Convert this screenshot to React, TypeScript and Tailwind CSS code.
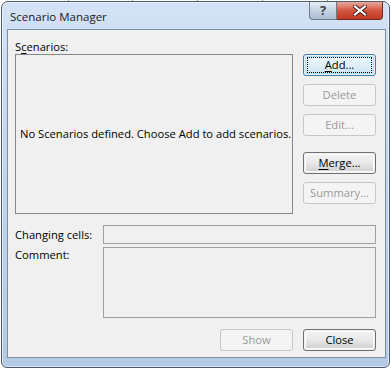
import React from 'react';

const font = { fontFamily: '"Open Sans", "Noto Sans", sans-serif' };

function Btn({ label, k, disabled, primary, className = '' }: { label: string; k?: string; disabled?: boolean; primary?: boolean; className?: string }) {
  const text = k ? (
    <>
      {label.slice(0, label.indexOf(k))}
      <span className="underline underline-offset-2">{k}</span>
      {label.slice(label.indexOf(k) + 1)}
    </>
  ) : (
    label
  );
  if (disabled) {
    return (
      <div className={`flex h-[22px] w-[73px] items-center justify-center rounded-[3px] border border-[#c4c8cc] bg-[#f4f4f4] text-[#9a9a9a] ${className}`}>
        {text}
      </div>
    );
  }
  return (
    <div
      className={`h-[22px] w-[73px] rounded-[3px] border p-px ${primary ? 'border-[#3c7fb1]' : 'border-[#707070]'} ${className}`}
    >
      <div
        className={`flex h-full w-full items-center justify-center rounded-[2px] border text-black ${
          primary ? 'border-[#a8dff7] bg-gradient-to-b from-[#eaf6fd] via-[#e2f0f9] to-[#cde3f2]' : 'border-[#fcfcfc] bg-gradient-to-b from-[#f2f2f2] via-[#e8e8e8] to-[#d2d2d2]'
        }`}
      >
        <div className={`flex h-[14px] items-center ${primary ? 'w-[63px] justify-center outline outline-1 outline-dotted outline-black' : ''}`}>
          {text}
        </div>
      </div>
    </div>
  );
}

export default function App() {
  return (
    <div className="relative h-[368px] w-[391px] overflow-hidden bg-white text-[11.2px]" style={font}>
      {/* spreadsheet behind the dialog */}
      <div className="flex h-[3px] w-full">
        <div className="w-[69px] border-r border-[#9a9a9a]" />
        <div className="w-[64px] border-r border-[#9a9a9a]" />
        <div className="w-[65px] border-r border-[#9a9a9a]" />
        <div className="w-[65px] border-r border-[#9a9a9a]" />
        <div className="w-[65px] border-r border-[#9a9a9a]" />
      </div>

      {/* window */}
      <div className="absolute left-[1px] top-[1px] flex h-[367px] w-[389px] flex-col rounded-t-[7px] rounded-b-[6px] border border-[#4d5a68] bg-gradient-to-b from-[#d3e2f4] via-[#bfd4ee] to-[#b3cae6] shadow-[inset_0_0_0_1px_rgba(255,255,255,0.55)]">
        {/* title bar */}
        <div className="flex h-[27px] shrink-0 items-start justify-between">
          <div className="pl-[8px] pt-[6px] text-[11.5px] text-[#1a1a1a]">Scenario Manager</div>
          <div className="mr-[6px] flex">
            <div className="flex h-[18px] w-[28px] items-center justify-center rounded-bl-[4px] border border-t-0 border-[#6a7b90] bg-gradient-to-b from-[#e4ecf5] via-[#c6d3e2] to-[#a9bcd3] text-[13px] font-bold text-[#39434f]">
              ?
            </div>
            <div className="flex h-[18px] w-[46px] items-center justify-center rounded-br-[4px] border border-l-0 border-t-0 border-[#6f2a22] bg-gradient-to-b from-[#e7a99c] via-[#d3543e] to-[#c23a22]">
              <svg width="14" height="11" viewBox="0 0 14 11">
                <path d="M2 1.5 L12 9.5 M12 1.5 L2 9.5" stroke="#3b1510" strokeWidth="4" strokeLinecap="square" />
                <path d="M2 1.5 L12 9.5 M12 1.5 L2 9.5" stroke="#ffffff" strokeWidth="2.2" strokeLinecap="square" />
              </svg>
            </div>
          </div>
        </div>

        {/* client area */}
        <div className="ml-[5px] mr-[3px] flex h-[329px] flex-col border border-[#7e8fa3] bg-[#f0f0f0] pl-[7px] pr-[9px] text-black">
          <div className="mt-[8px] h-[16px] leading-[17px]">
            S<span className="underline underline-offset-2">c</span>enarios:
          </div>
          <div className="flex gap-[10px]">
            <div className="flex h-[160px] w-[278px] shrink-0 items-center overflow-hidden whitespace-nowrap border border-[#828790] pl-[4px]">
              No Scenarios defined. Choose Add to add scenarios.
            </div>
            <div className="flex w-[73px] flex-col">
              <Btn label="Add..." k="A" primary />
              <Btn label="Delete" disabled className="mt-[8px]" />
              <Btn label="Edit..." disabled className="mt-[8px]" />
              <Btn label="Merge..." k="M" className="mt-[16px]" />
              <Btn label="Summary..." disabled className="mt-[8px]" />
            </div>
          </div>

          <div className="mt-[11px] flex items-center">
            <div className="w-[88px] leading-[16px]">Changing cells:</div>
            <div className="h-[19px] flex-1 border border-[#a0a0a0]" />
          </div>
          <div className="mt-[3px] flex items-start">
            <div className="w-[88px] leading-[16px]">Comment:</div>
            <div className="h-[71px] flex-1 border border-[#a0a0a0]" />
          </div>

          <div className="mt-[11px] flex justify-end gap-[10px]">
            <Btn label="Show" disabled />
            <Btn label="Close" />
          </div>
        </div>
      </div>
    </div>
  );
}
